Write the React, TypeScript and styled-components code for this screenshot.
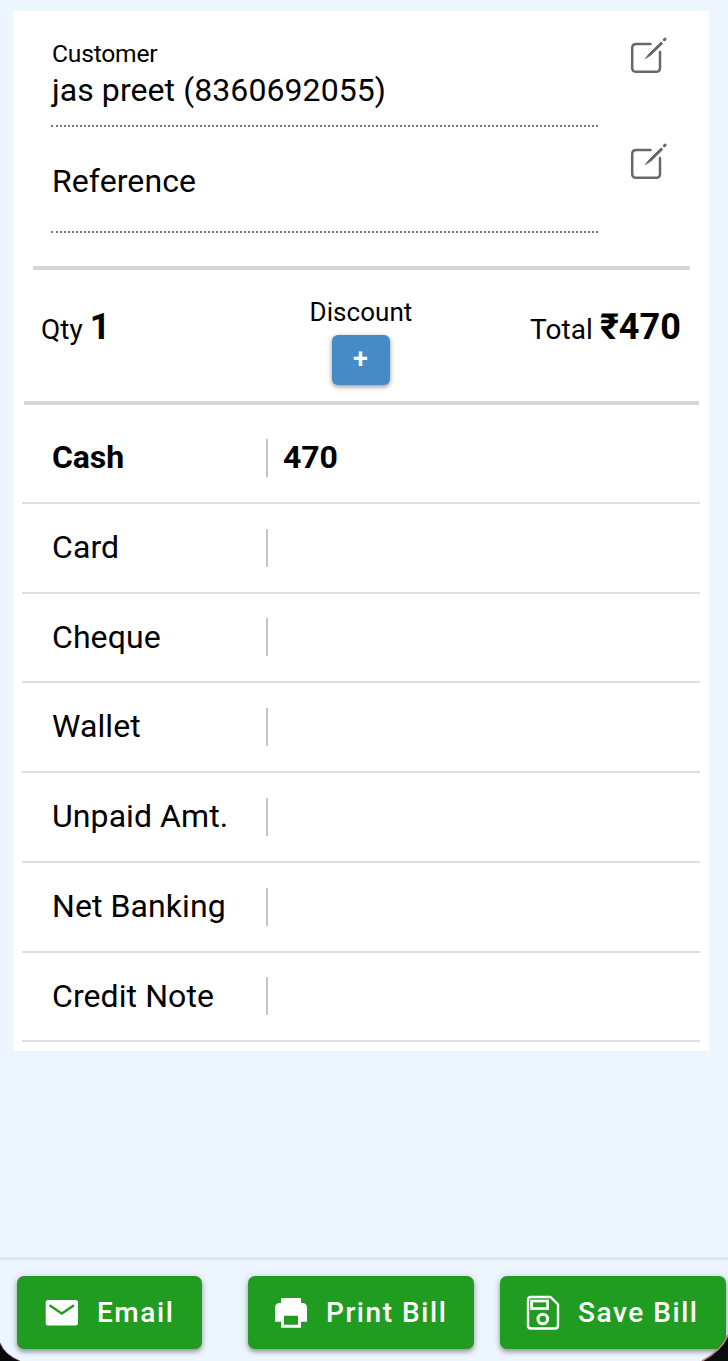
import React from 'react';
import styled, { createGlobalStyle } from 'styled-components';

const GlobalStyle = createGlobalStyle`
  * { box-sizing: border-box; }
  body {
    margin: 0;
    background: #edf6fe;
    color: #000;
    font-family: Roboto, "Noto Sans", sans-serif;
    overflow: hidden;
  }
`;

const Screen = styled.div`
  position: relative;
  display: flex;
  flex-direction: column;
  width: 728px;
  height: 1361px;
  padding-top: 11px;
  overflow: hidden;
  background: #edf6fe;
`;

const Card = styled.main`
  width: 696px;
  height: 1040px;
  margin-left: 13px;
  flex: none;
  background: #fff;
`;

const Party = styled.section`
  margin: 0 19px 0 20px;
  height: 259px;
  padding: 10px 0 0 18px;
  border-bottom: 4px solid #d5d5d5;
`;

const Field = styled.div`
  display: flex;
  justify-content: space-between;
  height: 106px;
`;

const FieldBody = styled.div<{ $single?: boolean }>`
  width: 547px;
  height: 106px;
  padding-top: ${p => (p.$single ? 33 : 17)}px;
  border-bottom: 2px dotted #777;
`;

const FieldLabel = styled.div`
  padding-left: 1px;
  font-size: 24.6px;
  line-height: 31px;
  letter-spacing: -0.2px;
`;

const FieldValue = styled.div`
  padding-left: 1px;
  font-size: 32px;
  line-height: 42px;
  letter-spacing: 0.08px;
  white-space: nowrap;
`;

const EditButton = styled.button`
  width: 38px;
  height: 38px;
  margin: 16px 22px 0 0;
  padding: 0;
  border: 0;
  background: none;
  svg { display: block; }
`;

const Summary = styled.section`
  display: grid;
  grid-template-columns: 1fr 1fr 1fr;
  height: 135px;
  margin: 0 10px 0 11px;
  padding: 0 18px 0 17px;
  border-bottom: 4px solid #d5d5d5;
`;

const Figure = styled.div<{ $end?: boolean }>`
  padding-top: 36px;
  text-align: ${p => (p.$end ? 'right' : 'left')};
  font-size: 28px;
  line-height: 42px;
  white-space: nowrap;
  letter-spacing: 0.05px;
  strong { font-size: 36px; font-weight: 700; }
`;

const Discount = styled.div`
  display: flex;
  flex-direction: column;
  align-items: center;
  padding-top: 26px;
  font-size: 26px;
  line-height: 32px;
  letter-spacing: 0.05px;
`;

const AddButton = styled.button`
  width: 58px;
  height: 50px;
  margin-top: 7px;
  padding: 0 1px 2px 0;
  border: 0;
  border-radius: 6px;
  background: #468ac8;
  color: #fff;
  font: 600 27px/48px Roboto, sans-serif;
  box-shadow: 0 2px 4px rgba(0, 0, 0, 0.3), 0 1px 6px rgba(0, 0, 0, 0.15);
`;

const Payments = styled.section`
  margin: 0 9px;
  padding-top: 9px;
`;

const PaymentRow = styled.div<{ $active?: boolean }>`
  display: flex;
  align-items: center;
  height: 89.75px;
  padding-left: 30px;
  border-bottom: 2px solid #dedede;
  font-size: 32px;
  font-weight: ${p => (p.$active ? 700 : 400)};
  letter-spacing: ${p => (p.$active ? -0.1 : 0.08)}px;
`;

const Method = styled.div`
  width: 214px;
  padding-bottom: 1.4px;
`;

const Amount = styled.div`
  height: 38px;
  padding-left: 15px;
  border-left: 2px solid #c4c4c4;
  line-height: 36px;
`;

const ActionBar = styled.footer`
  display: flex;
  height: 104px;
  margin-top: auto;
  padding: 16px 2px 0 17px;
  border-top: 3px solid #dde5ed;
`;

const Action = styled.button<{ $w: number; $inset: number }>`
  display: flex;
  align-items: center;
  flex: none;
  width: ${p => p.$w}px;
  height: 73px;
  padding: 0 0 0 ${p => p.$inset}px;
  gap: 16px;
  border: 0;
  border-radius: 7px;
  background: #209c20;
  color: #fff;
  font: 500 28px/36px Roboto, sans-serif;
  letter-spacing: 1.55px;
  white-space: nowrap;
  box-shadow: 0 3px 4px rgba(0, 0, 0, 0.3), 0 1px 8px rgba(0, 0, 0, 0.16);
  svg { flex: none; }
  &:first-child { margin-right: 46px; }
  &:last-child { margin-left: 26px; }
`;

const Corners = styled.svg`
  position: absolute;
  left: 0;
  bottom: 0;
  pointer-events: none;
`;

const EditIcon = () => (
  <svg width="38" height="38" viewBox="0 0 38 38" fill="none" stroke="#686868" strokeWidth="2.5" strokeLinecap="round">
    <path d="M20.5 7H6.5Q2.2 7 2.2 11V31Q2.2 34.8 6.5 34.8H26Q30 34.8 30 31V15" />
    <path d="M15.6 21.3L19.6 16.3L31.2 5L32.8 6.6L21.2 17.8Z" fill="#686868" strokeWidth="1" strokeLinejoin="round" />
    <path d="M34.4 2.7L35 2.1" strokeWidth="3" />
  </svg>
);

const MailIcon = () => (
  <svg width="38" height="38" viewBox="0 0 38 38">
    <rect x="2.7" y="6" width="32.3" height="25.5" rx="2.5" fill="#fff" />
    <path d="M6.5 11.2L18.8 19.5L31 11.2" fill="none" stroke="#209c20" strokeWidth="2.3" />
  </svg>
);

const PrintIcon = () => (
  <svg width="38" height="38" viewBox="0 0 38 38">
    <path
      fill="#fff"
      fillRule="evenodd"
      d="M9 4H29V9H30Q35 9 35 14V27.7H29V33.8H9V27.7H3V14Q3 9 8 9H9ZM12 21.7V30.7H26V21.7Z"
    />
  </svg>
);

const SaveIcon = () => (
  <svg width="38" height="38" viewBox="0 0 38 38" fill="none" stroke="#fff">
    <path d="M7 3H26.5L34 10.5V31.5Q34 34.5 31 34.5H7Q4 34.5 4 31.5V6Q4 3 7 3Z" strokeWidth="2.4" />
    <rect x="7.6" y="7" width="16" height="7.5" strokeWidth="2.7" />
    <circle cx="18.8" cy="25" r="4.8" strokeWidth="3.1" />
  </svg>
);

const payments = [
  { method: 'Cash', amount: '470' },
  { method: 'Card', amount: '' },
  { method: 'Cheque', amount: '' },
  { method: 'Wallet', amount: '' },
  { method: 'Unpaid Amt.', amount: '' },
  { method: 'Net Banking', amount: '' },
  { method: 'Credit Note', amount: '' },
];

export default function App() {
  return (
    <Screen>
      <GlobalStyle />
      <Card>
        <Party>
          <Field>
            <FieldBody>
              <FieldLabel>Customer</FieldLabel>
              <FieldValue>jas preet (8360692055)</FieldValue>
            </FieldBody>
            <EditButton aria-label="Edit customer"><EditIcon /></EditButton>
          </Field>
          <Field>
            <FieldBody $single>
              <FieldValue>Reference</FieldValue>
            </FieldBody>
            <EditButton aria-label="Edit reference"><EditIcon /></EditButton>
          </Field>
        </Party>
        <Summary>
          <Figure>Qty <strong>1</strong></Figure>
          <Discount>
            Discount
            <AddButton>+</AddButton>
          </Discount>
          <Figure $end>Total <strong>₹470</strong></Figure>
        </Summary>
        <Payments>
          {payments.map(p => (
            <PaymentRow key={p.method} $active={p.amount !== ''}>
              <Method>{p.method}</Method>
              <Amount>{p.amount}</Amount>
            </PaymentRow>
          ))}
        </Payments>
      </Card>
      <ActionBar>
        <Action $w={185} $inset={26}><MailIcon />Email</Action>
        <Action $w={226} $inset={24}><PrintIcon />Print Bill</Action>
        <Action $w={226} $inset={24}><SaveIcon />Save Bill</Action>
      </ActionBar>
      <Corners width="728" height="50" viewBox="0 0 728 50">
        <path d="M0 32Q5 44 20 50H0Z" fill="#07090d" />
        <path d="M0 32Q5 44 20 50" fill="none" stroke="#8c5c62" strokeWidth="0.8" />
        <path d="M728 24Q722 39 702 50H728Z" fill="#0b0c10" />
        <path d="M728 24Q722 39 702 50" fill="none" stroke="#c08078" strokeWidth="1.6" />
      </Corners>
    </Screen>
  );
}
